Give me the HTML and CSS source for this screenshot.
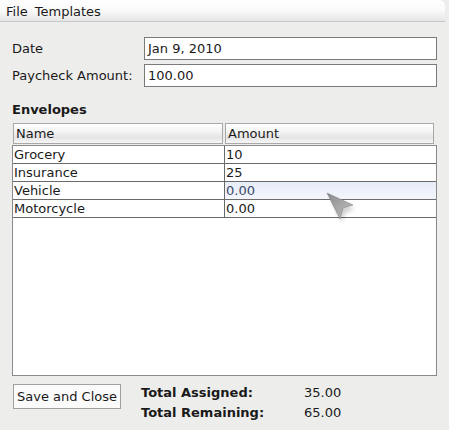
FILE: index.html
```html
<!DOCTYPE html>
<html>
<head>
<meta charset="utf-8">
<link rel="stylesheet" href="styles.css">
</head>
<body>
<div class="menubar"><span class="menu">File</span><span class="menu">Templates</span></div>
<div class="content">
  <div class="form">
    <div class="frow"><label class="flabel">Date</label><div class="field">Jan 9, 2010</div></div>
    <div class="frow"><label class="flabel">Paycheck Amount:</label><div class="field">100.00</div></div>
  </div>
  <div class="section">Envelopes</div>
  <div class="table">
    <div class="thead"><div class="th th-name">Name</div><div class="th th-amt">Amount</div></div>
    <div class="tbody">
      <div class="tr"><div class="td td-name">Grocery</div><div class="td td-amt">10</div></div>
      <div class="tr"><div class="td td-name">Insurance</div><div class="td td-amt">25</div></div>
      <div class="tr"><div class="td td-name">Vehicle</div><div class="td td-amt editing">0.00</div></div>
      <div class="tr"><div class="td td-name">Motorcycle</div><div class="td td-amt">0.00</div></div>
    </div>
  </div>
  <div class="footer">
    <div class="btn">Save and Close</div>
    <div class="totals">
      <div class="trow"><span class="tlabel">Total Assigned:</span><span class="tval">35.00</span></div>
      <div class="trow"><span class="tlabel">Total Remaining:</span><span class="tval">65.00</span></div>
    </div>
  </div>
</div>
<svg class="cursor" width="36" height="34" viewBox="0 0 36 34">
  <defs>
    <linearGradient id="cg" x1="0" y1="0" x2="1" y2="1">
      <stop offset="0" stop-color="#8a8a8a"/>
      <stop offset="1" stop-color="#c4c4c4"/>
    </linearGradient>
    <filter id="blur"><feGaussianBlur stdDeviation="2"/></filter>
  </defs>
  <path d="M6 8 L30 18 L20 22 L17 32 Z" fill="#000" opacity="0.18" filter="url(#blur)"/>
  <path d="M2 2 L28 14 L18 17 L15 28 Z" fill="url(#cg)" stroke="#888" stroke-width="0.6"/>
</svg>
</body>
</html>
```
FILE: styles.css
```css
html, body {
  margin: 0;
  padding: 0;
}
body {
  width: 449px;
  height: 430px;
  background: #ededec;
  font-family: "DejaVu Sans", sans-serif;
  font-size: 13px;
  color: #1a1a1a;
  position: relative;
  overflow: hidden;
}
.menubar {
  width: 445px;
  height: 22px;
  background: linear-gradient(#ffffff, #fafafa 50%, #e6e6e6);
  border-bottom: 1px solid #c8c8c8;
  border-top-right-radius: 6px;
  display: flex;
  align-items: center;
  padding-left: 6px;
  padding-top: 1px;
  box-sizing: border-box;
}
.menu {
  margin-right: 7px;
}
.content {
  padding: 15px 12px 0 12px;
}
.form {
  display: flex;
  flex-direction: column;
  gap: 4px;
}
.frow {
  display: flex;
  align-items: center;
}
.flabel {
  width: 132px;
}
.field {
  width: 293px;
  height: 23px;
  box-sizing: border-box;
  border: 1px solid #7a7a7a;
  background: #fff;
  padding-left: 3px;
  line-height: 21px;
}
.section {
  font-weight: bold;
  margin-top: 15px;
  height: 19px;
}
.table {
  margin-top: 2px;
  width: 425px;
}
.thead {
  display: flex;
  height: 21px;
  padding-left: 1px;
  gap: 2px;
}
.th {
  box-sizing: border-box;
  border: 1px solid #a8a8a8;
  background: linear-gradient(#ffffff, #f4f4f4 40%, #e4e4e4 70%, #f6f6f6);
  line-height: 19px;
  padding-left: 2px;
}
.th-name { width: 210px; }
.th-amt { width: 209px; }
.tbody {
  margin-top: 1px;
  height: 231px;
  box-sizing: border-box;
  border: 1px solid #8a8a8a;
  background: #fff;
}
.tr {
  display: flex;
  height: 18px;
  box-sizing: border-box;
  border-bottom: 1px solid #6a6a6a;
}
.td {
  line-height: 18px;
  padding-left: 1px;
  box-sizing: border-box;
}
.td-name {
  width: 212px;
  border-right: 1px solid #6a6a6a;
}
.td-amt {
  flex: 1;
}
.editing {
  background: linear-gradient(#e6ecf8, #f4f6fc);
  color: #3a4a6a;
}
.footer {
  display: flex;
  margin-top: 7px;
}
.btn {
  margin-left: 1px;
  width: 108px;
  height: 25px;
  box-sizing: border-box;
  border: 1px solid #a0a0a0;
  background: #fbfbfb;
  text-align: center;
  line-height: 23px;
  margin-top: 1px;
}
.totals {
  margin-left: 20px;
  display: flex;
  flex-direction: column;
  gap: 2px;
}
.trow {
  display: flex;
  height: 18px;
  align-items: center;
}
.tlabel {
  font-weight: bold;
  width: 163px;
}
.cursor {
  position: absolute;
  left: 325px;
  top: 191px;
}
```
